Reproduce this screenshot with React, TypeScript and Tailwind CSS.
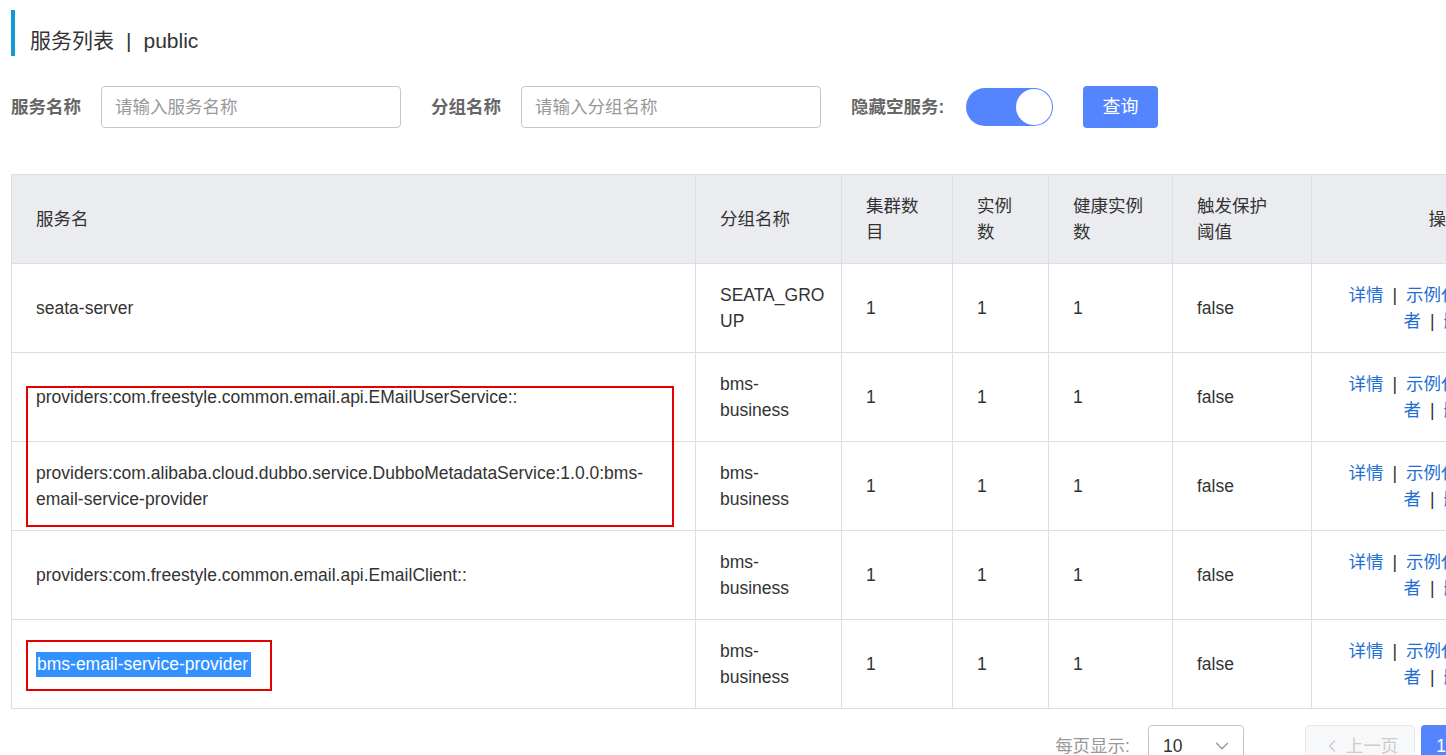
import React from 'react';
import { ChevronDown, ChevronLeft, ChevronRight } from 'lucide-react';

const rows = [
  { name: 'seata-server', group: ['SEATA_GRO', 'UP'] },
  { name: 'providers:com.freestyle.common.email.api.EMailUserService::', group: ['bms-', 'business'] },
  { name: 'providers:com.alibaba.cloud.dubbo.service.DubboMetadataService:1.0.0:bms-email-service-provider', group: ['bms-', 'business'] },
  { name: 'providers:com.freestyle.common.email.api.EmailClient::', group: ['bms-', 'business'] },
  { name: 'bms-email-service-provider', group: ['bms-', 'business'], selected: true },
];

const headers = [
  { label: ['服务名'], w: 'w-[684px]' },
  { label: ['分组名称'], w: 'w-[146px]' },
  { label: ['集群数', '目'], w: 'w-[111px]' },
  { label: ['实例', '数'], w: 'w-[96px]' },
  { label: ['健康实例', '数'], w: 'w-[124px]' },
  { label: ['触发保护', '阈值'], w: 'w-[139px]' },
];

function Ops() {
  return (
    <div className="text-center whitespace-nowrap">
      <div>
        <a className="text-[#1f6fd6]">详情</a>
        <span className="text-[#333] mx-[9px]">|</span>
        <a className="text-[#1f6fd6]">示例代码</a>
        <span className="text-[#333] mx-[9px]">|</span>
        <a className="text-[#1f6fd6]">订阅</a>
      </div>
      <div>
        <a className="text-[#1f6fd6]">者</a>
        <span className="text-[#333] mx-[9px]">|</span>
        <a className="text-[#1f6fd6]">删除</a>
      </div>
    </div>
  );
}

export default function App() {
  return (
    <div className="w-[1446px] h-[755px] overflow-hidden bg-white text-[#333] font-['Liberation_Sans','Noto_Sans_CJK_SC',sans-serif]">
      <div className="w-[1620px] pl-[11px] pt-[10px]">
        {/* title */}
        <div className="h-[46px] border-l-[4px] border-[#109ad5] pl-[15px] flex items-end text-[21px] leading-[30px] text-[#333]">
          <span>服务列表</span>
          <span className="mx-[12px]">|</span>
          <span>public</span>
        </div>

        {/* filters */}
        <div className="mt-[30px] flex items-center h-[42px] text-[17.5px]">
          <span className="font-bold text-[#666] w-[72px]">服务名称</span>
          <div className="ml-[18px] w-[300px] h-[42px] border border-[#c4c6cf] rounded-[4px] flex items-center px-[13px] text-[#999]">
            请输入服务名称
          </div>
          <span className="ml-[30px] font-bold text-[#666] w-[72px]">分组名称</span>
          <div className="ml-[18px] w-[300px] h-[42px] border border-[#c4c6cf] rounded-[4px] flex items-center px-[13px] text-[#999]">
            请输入分组名称
          </div>
          <span className="ml-[30px] w-[95px] font-bold text-[#666]">隐藏空服务:</span>
          <div className="ml-[20px] w-[87px] h-[38px] rounded-full bg-[#5584ff] flex items-center justify-end pr-[1px]">
            <div className="w-[36px] h-[36px] rounded-full bg-white" />
          </div>
          <button className="ml-[30px] w-[75px] h-[42px] rounded-[4px] bg-[#5584ff] text-white text-[18px]">查询</button>
        </div>

        {/* table */}
        <div className="relative mt-[46px] w-[1560px]">
          <table className="table-fixed border-collapse w-[1560px] text-[17.5px] leading-[26px]">
            <thead>
              <tr className="h-[89px] bg-[#ebecf0]">
                {headers.map((h) => (
                  <th key={h.label.join('')} className={`${h.w} border border-[#dcdee3] px-[24px] text-left font-normal align-middle whitespace-nowrap`}>
                    {h.label[0]}
                    {h.label[1] && (<><br />{h.label[1]}</>)}
                  </th>
                ))}
                <th className="border border-[#dcdee3] px-[24px] pl-[34px] text-center font-normal align-middle">操作</th>
              </tr>
            </thead>
            <tbody>
              {rows.map((r, i) => (
                <tr key={i} className="h-[89px]">
                  <td className="border border-[#dcdee3] px-[24px] align-middle">
                    {r.selected ? (
                      <span className="inline-block bg-[#3390ff] text-white leading-[25px] pl-[1px] pr-[3px]">{r.name}</span>
                    ) : (
                      r.name
                    )}
                  </td>
                  <td className="border border-[#dcdee3] px-[24px] align-middle whitespace-nowrap">
                    {r.group[0]}
                    <br />
                    {r.group[1]}
                  </td>
                  <td className="border border-[#dcdee3] px-[24px] align-middle">1</td>
                  <td className="border border-[#dcdee3] px-[24px] align-middle">1</td>
                  <td className="border border-[#dcdee3] px-[24px] align-middle">1</td>
                  <td className="border border-[#dcdee3] px-[24px] align-middle">false</td>
                  <td className="border border-[#dcdee3] px-[24px] align-middle">
                    <Ops />
                  </td>
                </tr>
              ))}
            </tbody>
          </table>

          {/* annotation boxes */}
          <div className="absolute left-[15px] top-[212px] w-[648px] h-[141px] border-2 border-[#e60000] pointer-events-none" />
          <div className="absolute left-[15px] top-[466px] w-[246px] h-[51px] border-2 border-[#e60000] pointer-events-none" />
        </div>

        {/* pagination */}
        <div className="mt-[16px] w-[1566px] flex items-center justify-end text-[17.5px]">
          <span className="text-[#999]">每页显示:</span>
          <div className="ml-[18px] w-[96px] h-[42px] border border-[#c4c6cf] rounded-[4px] flex items-center justify-between pl-[14px] pr-[10px] text-[#333]">
            <span>10</span>
            <ChevronDown className="w-[22px] h-[22px] text-[#999]" strokeWidth={1.5} />
          </div>
          <div className="ml-[61px] w-[110px] h-[42px] border border-[#e6e7eb] bg-[#f7f8fa] rounded-[4px] flex items-center justify-center gap-[4px] text-[#ccc]">
            <ChevronLeft className="w-[20px] h-[20px]" strokeWidth={1.5} />
            <span>上一页</span>
          </div>
          <div className="ml-[6px] w-[40px] h-[42px] bg-[#5584ff] rounded-[4px] flex items-center justify-center text-white">1</div>
          <div className="ml-[6px] w-[110px] h-[42px] border border-[#c4c6cf] rounded-[4px] flex items-center justify-center gap-[4px] text-[#333]">
            <span>下一页</span>
            <ChevronRight className="w-[20px] h-[20px]" strokeWidth={1.5} />
          </div>
        </div>
      </div>
    </div>
  );
}
